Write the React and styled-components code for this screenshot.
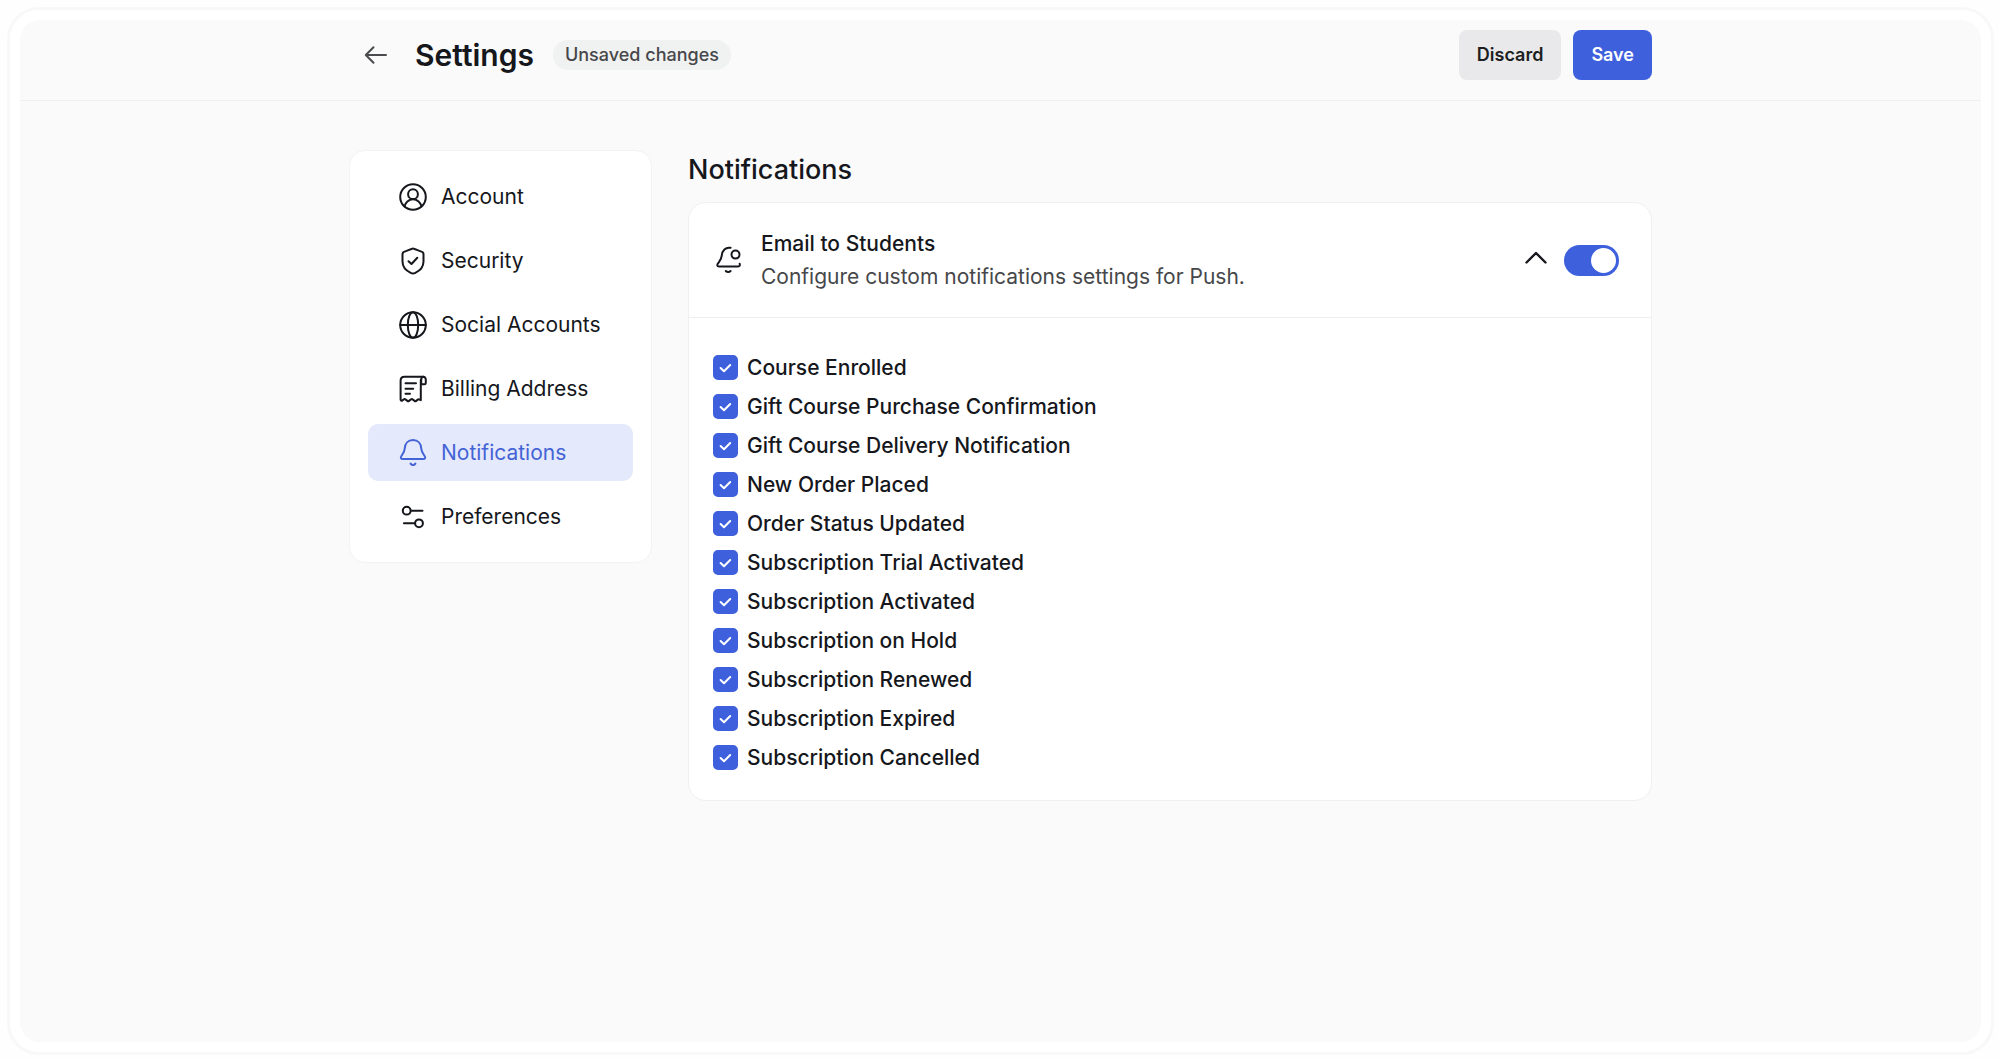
import { useState } from 'react';
import styled, { createGlobalStyle } from 'styled-components';

const navItems = [
  { id: 'account', label: 'Account' },
  { id: 'security', label: 'Security' },
  { id: 'social', label: 'Social Accounts' },
  { id: 'billing', label: 'Billing Address' },
  { id: 'notifications', label: 'Notifications' },
  { id: 'preferences', label: 'Preferences' },
];

const emailEvents = [
  'Course Enrolled',
  'Gift Course Purchase Confirmation',
  'Gift Course Delivery Notification',
  'New Order Placed',
  'Order Status Updated',
  'Subscription Trial Activated',
  'Subscription Activated',
  'Subscription on Hold',
  'Subscription Renewed',
  'Subscription Expired',
  'Subscription Cancelled',
];

const iconShapes = {
  account: (
    <>
      <circle cx="14" cy="14" r="12.8" />
      <circle cx="14" cy="11.2" r="4.9" />
      <path d="M5.4 23.4C6.3 19.6 9.7 16.3 14 16.3s7.7 3.3 8.6 7.1" />
    </>
  ),
  security: (
    <>
      <path d="M14 1.5c-1.2 0-6.5 2.6-8.4 3.1-1.8.5-2.1.9-2.1 2.6v7.3c0 6.6 5.2 9.9 8.2 11.3.9.5 1.4.7 2.3.7s1.4-.2 2.3-.7c3-1.4 8.2-4.7 8.2-11.3V7.2c0-1.7-.3-2.1-2.1-2.6-1.9-.5-7.2-3.1-8.4-3.1z" />
      <path d="M9.5 14.2l3 2.8 5.8-6.2" />
    </>
  ),
  social: (
    <>
      <circle cx="14" cy="14" r="12.8" />
      <ellipse cx="14" cy="14" rx="5.2" ry="12.8" />
      <path d="M1.2 14h25.6" />
    </>
  ),
  billing: (
    <>
      <path d="M24.4 1.8H5.5C3 1.8 1.6 3.2 1.6 5.7V24.6c0 1 1 1.4 1.8.8l1.4-1c.5-.4 1.1-.4 1.6 0l2 1.5c.5.4 1.1.4 1.6 0l2-1.5c.5-.4 1.1-.4 1.6 0l2 1.5c.5.4 1.1.4 1.6 0l1.6-1.3c.5-.4 1-.4 1.5-.1l1.5.6V5" />
      <path d="M22.2 9.3h3.2c1 0 1.4-.4 1.4-1.4V5c0-2-1-3.2-2.4-3.2S22.2 3 22.2 5z" />
      <path d="M6.5 8.3H17M6.5 13.7h7.7M6.5 18.8H11" />
    </>
  ),
  notifications: (
    <>
      <path d="M14 .9C9 .9 6 4.6 5.8 9.2 5.7 12.6 4.4 14.2 2.4 17 1.2 18.8 1.9 20 4 20h20c2.1 0 2.8-1.2 1.6-3-2-2.8-3.3-4.4-3.4-7.8C22 4.6 19 .9 14 .9z" />
      <path d="M11.6 24.6c.6.9 1.4 1.4 2.4 1.4s1.8-.5 2.4-1.4" />
    </>
  ),
  preferences: (
    <>
      <circle cx="7.7" cy="7.7" r="3.9" />
      <path d="M12 7.7h11.5M4.9 20.3h11" />
      <circle cx="20" cy="20.3" r="3.9" />
    </>
  ),
  bellDot: (
    <>
      <path d="M16.6 1.8C11.4.8 8.2 4.6 7.8 9.4c-.3 3.8-1.4 4.9-3.4 7.4-1.7 2.1-1.5 3.7.6 3.7h18.6c1.8 0 2.6-.9 2.1-2.7" />
      <circle cx="21.5" cy="8.6" r="4" />
      <path d="M11.8 25c.6.7 1.4 1.1 2.4 1.1s1.8-.4 2.4-1.1" />
    </>
  ),
};

const Icon = ({ name }) => (
  <IconSvg viewBox="0 0 28 28" aria-hidden="true">
    {iconShapes[name]}
  </IconSvg>
);

const App = () => {
  const [activeNav, setActiveNav] = useState('notifications');
  const [enabled, setEnabled] = useState(true);
  const [open, setOpen] = useState(true);
  const [checked, setChecked] = useState(emailEvents);

  const toggleEvent = (event) => {
    setChecked((prev) =>
      prev.includes(event) ? prev.filter((e) => e !== event) : [...prev, event]
    );
  };

  return (
    <>
      <GlobalStyle />
      <Frame>
        <Page>
          <Header>
            <HeaderInner>
              <BackButton type="button" aria-label="Back">
                <svg width="24" height="24" viewBox="0 0 24 24" aria-hidden="true">
                  <path d="M22 12H2M9.5 4.2L1.8 12l7.7 7.8" />
                </svg>
              </BackButton>
              <Title>Settings</Title>
              <Badge>Unsaved changes</Badge>
              <Actions>
                <Button type="button">Discard</Button>
                <Button type="button" $primary>Save</Button>
              </Actions>
            </HeaderInner>
          </Header>

          <Content>
            <Sidebar>
              {navItems.map((item) => (
                <NavItem
                  key={item.id}
                  href={`#${item.id}`}
                  $active={item.id === activeNav}
                  onClick={() => setActiveNav(item.id)}
                >
                  <Icon name={item.id} />
                  {item.label}
                </NavItem>
              ))}
            </Sidebar>

            <Main>
              <SectionTitle>Notifications</SectionTitle>
              <Card>
                <CardHeader>
                  <Icon name="bellDot" />
                  <CardText>
                    <CardTitle id="email-title">Email to Students</CardTitle>
                    <CardSubtitle>Configure custom notifications settings for Push.</CardSubtitle>
                  </CardText>
                  <CollapseButton
                    type="button"
                    aria-label="Toggle list"
                    aria-expanded={open}
                    $open={open}
                    onClick={() => setOpen(!open)}
                  >
                    <svg width="24" height="24" viewBox="0 0 24 24" aria-hidden="true">
                      <path d="M2.5 14.5L12 5l9.5 9.5" />
                    </svg>
                  </CollapseButton>
                  <Switch
                    type="checkbox"
                    role="switch"
                    aria-labelledby="email-title"
                    checked={enabled}
                    onChange={() => setEnabled(!enabled)}
                  />
                </CardHeader>
                {open && (
                  <EventList>
                    {emailEvents.map((event) => (
                      <EventRow key={event}>
                        <CheckWrap>
                          <Checkbox
                            type="checkbox"
                            checked={checked.includes(event)}
                            onChange={() => toggleEvent(event)}
                          />
                          <CheckMark viewBox="0 0 25 25" aria-hidden="true">
                            <path d="M7.6 13l3.4 3.2 6.2-6.2" />
                          </CheckMark>
                        </CheckWrap>
                        {event}
                      </EventRow>
                    ))}
                  </EventList>
                )}
              </Card>
            </Main>
          </Content>
        </Page>
      </Frame>
    </>
  );
};

const GlobalStyle = createGlobalStyle`
  * {
    box-sizing: border-box;
  }

  body {
    margin: 0;
    background: #fefefe;
    color: #15171c;
    font-family: Inter, 'Liberation Sans', sans-serif;
  }

  button, input {
    font-family: inherit;
    margin: 0;
  }
`;

const Frame = styled.div`
  display: flex;
  min-height: calc(100vh - 13px);
  margin: 7px 5px 6px 7px;
  padding: 10px;
  border: 3px solid #f8f8f8;
  border-radius: 32px;
  background: #ffffff;
`;

const Page = styled.div`
  flex: 1;
  border-radius: 20px;
  background: #fafafa;
`;

const Header = styled.header`
  border-bottom: 1px solid #f0f0f0;
`;

const HeaderInner = styled.div`
  display: flex;
  align-items: center;
  max-width: 1303px;
  margin: 0 auto;
  padding: 10px 0 20px 15px;
`;

const BackButton = styled.button`
  display: flex;
  padding: 0;
  border: none;
  background: none;
  cursor: pointer;

  svg {
    fill: none;
    stroke: #4a4b4e;
    stroke-width: 2;
    stroke-linecap: round;
    stroke-linejoin: round;
  }
`;

const Title = styled.h1`
  margin: 0 19px 0 27px;
  font-size: 30px;
  line-height: 40px;
  font-weight: 600;
`;

const Badge = styled.span`
  padding: 0 12px;
  border-radius: 15px;
  background: #f0f1f1;
  color: #46474a;
  font-size: 18px;
  line-height: 30px;
  font-weight: 500;
`;

const Actions = styled.div`
  display: flex;
  gap: 12px;
  margin-left: auto;
`;

const Button = styled.button`
  padding: 0 18px;
  border: none;
  border-radius: 8px;
  background: ${({ $primary }) => ($primary ? '#3e60dd' : '#e9e9eb')};
  color: ${({ $primary }) => ($primary ? '#ffffff' : '#1d1e22')};
  font-size: 18px;
  line-height: 50px;
  font-weight: 600;
  cursor: pointer;
`;

const Content = styled.div`
  display: flex;
  align-items: flex-start;
  gap: 36px;
  max-width: 1303px;
  margin: 0 auto;
  padding: 49px 0;
`;

const Sidebar = styled.nav`
  display: flex;
  flex-direction: column;
  flex-shrink: 0;
  gap: 7px;
  width: 303px;
  padding: 17px 18px;
  border: 1px solid #f3f3f3;
  border-radius: 16px;
  background: #ffffff;
`;

const NavItem = styled.a`
  display: flex;
  align-items: center;
  gap: 14px;
  padding: 0 31px;
  border-radius: 10px;
  background: ${({ $active }) => ($active ? '#e4e9fb' : 'transparent')};
  color: ${({ $active }) => ($active ? '#4463d6' : '#15171c')};
  font-size: 21px;
  line-height: 57px;
  white-space: nowrap;
  text-decoration: none;
`;

const IconSvg = styled.svg`
  flex-shrink: 0;
  width: 28px;
  height: 28px;
  overflow: visible;
  fill: none;
  stroke: currentColor;
  stroke-width: 2;
  stroke-linecap: round;
  stroke-linejoin: round;
`;

const Main = styled.main`
  flex: 1;
  min-width: 0;
`;

const SectionTitle = styled.h2`
  margin: 0 0 12px;
  font-size: 27px;
  line-height: 40px;
  font-weight: 500;
`;

const Card = styled.section`
  border: 1px solid #f0f0f0;
  border-radius: 18px;
  background: #ffffff;
`;

const CardHeader = styled.div`
  display: flex;
  align-items: center;
  padding: 24px 32px 24px 25px;
  border-bottom: 1px solid #eeeeee;
`;

const CardText = styled.div`
  flex: 1;
  margin-left: 19px;
`;

const CardTitle = styled.h3`
  margin: 0;
  font-size: 21px;
  line-height: 33px;
  font-weight: 500;
`;

const CardSubtitle = styled.p`
  margin: 0;
  color: #46474a;
  font-size: 21px;
  line-height: 33px;
`;

const CollapseButton = styled.button`
  display: flex;
  margin-right: 16px;
  padding: 0;
  border: none;
  background: none;
  cursor: pointer;
  transform: ${({ $open }) => ($open ? 'none' : 'rotate(180deg)')};

  svg {
    fill: none;
    stroke: #15171c;
    stroke-width: 2.4;
    stroke-linecap: round;
    stroke-linejoin: round;
  }
`;

const Switch = styled.input`
  appearance: none;
  display: flex;
  align-items: center;
  width: 55px;
  height: 31px;
  padding: 0 3px;
  border-radius: 16px;
  background: #cfd0d4;
  cursor: pointer;

  &::before {
    content: '';
    width: 25px;
    height: 25px;
    border-radius: 50%;
    background: #ffffff;
  }

  &:checked {
    justify-content: flex-end;
    background: #3e60dd;
  }
`;

const EventList = styled.div`
  display: flex;
  flex-direction: column;
  gap: 6px;
  padding: 33px 24px 26px;
`;

const EventRow = styled.label`
  display: flex;
  align-items: center;
  align-self: flex-start;
  gap: 9px;
  font-size: 21px;
  line-height: 33px;
  font-weight: 500;
  cursor: pointer;
`;

const CheckWrap = styled.span`
  display: grid;

  > * {
    grid-area: 1 / 1;
  }
`;

const Checkbox = styled.input`
  appearance: none;
  width: 25px;
  height: 25px;
  border: 2px solid #cfd0d4;
  border-radius: 5px;
  cursor: pointer;

  &:checked {
    border-color: #3e60dd;
    background: #3e60dd;
  }
`;

const CheckMark = styled.svg`
  width: 25px;
  height: 25px;
  fill: none;
  stroke: #ffffff;
  stroke-width: 2;
  stroke-linecap: round;
  stroke-linejoin: round;
  pointer-events: none;
`;

export default App;
